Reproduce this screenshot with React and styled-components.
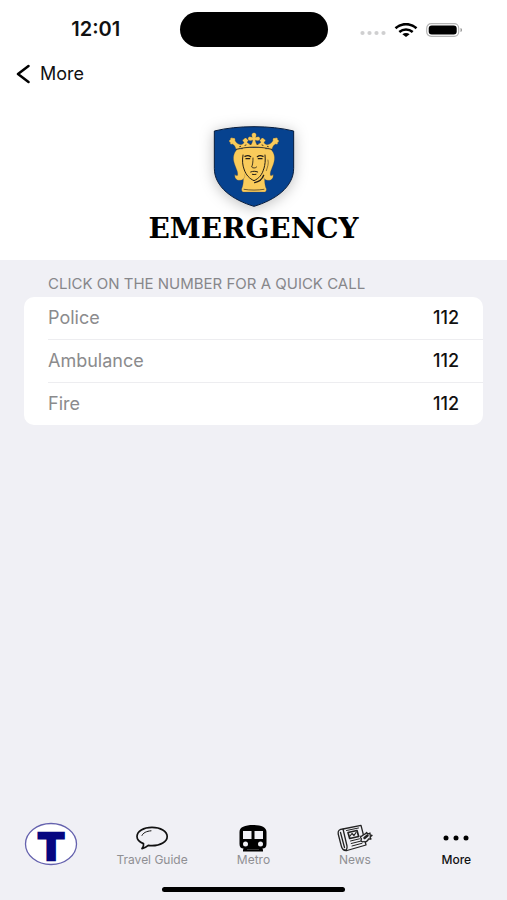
import { useState } from "react";
import styled, { createGlobalStyle } from "styled-components";

const GlobalStyle = createGlobalStyle`
  * {
    box-sizing: border-box;
  }
  body {
    margin: 0;
    background-color: #f0f0f5;
    font-family: Inter, "Liberation Sans", sans-serif;
    color: #111;
  }
`;

const Page = styled.div`
  min-height: 100vh;
  display: flex;
  flex-direction: column;
`;

const Header = styled.header`
  background-color: #fff;
  padding-bottom: 15px;
`;

const StatusBar = styled.div`
  display: grid;
  grid-template-columns: 1fr 148px 1fr;
  align-items: center;
  padding-top: 12px;
`;

const Time = styled.time`
  padding-left: 12px;
  text-align: center;
  font-size: 20px;
  font-weight: 600;
  line-height: 35px;
`;

const Island = styled.div`
  height: 35px;
  border-radius: 18px;
  background-color: #000;
`;

const StatusIcons = styled.div`
  display: flex;
  align-items: center;
  gap: 8px;
  padding-left: 32px;
`;

const BackButton = styled.button`
  display: flex;
  align-items: center;
  gap: 10px;
  margin-top: 15px;
  padding: 0 16px;
  border: none;
  background: none;
  color: #111;
  font-family: inherit;
  font-size: 18px;
  line-height: 24px;
`;

const Brand = styled.div`
  display: flex;
  flex-direction: column;
  align-items: center;
  padding-top: 40px;
`;

const ShieldSvg = styled.svg`
  display: block;
  filter: drop-shadow(0 2px 7px rgba(0, 0, 0, 0.25));
`;

const Title = styled.h1`
  margin: 5px 0 0;
  font-family: "DejaVu Serif", serif;
  font-size: 28px;
  font-weight: 700;
  line-height: 33px;
  color: #000;
`;

const Content = styled.main`
  flex: 1;
  padding: 14px 24px;
`;

const SectionTitle = styled.h2`
  margin: 0;
  padding: 0 24px;
  font-size: 15px;
  font-weight: 400;
  line-height: 20px;
  color: #87878b;
`;

const NumberList = styled.ul`
  margin: 3px 0 0;
  padding: 0 0 0 24px;
  list-style: none;
  border-radius: 10px;
  background-color: #fff;
`;

const NumberRow = styled.li`
  display: flex;
  justify-content: space-between;
  padding-right: 24px;
  font-size: 18px;
  line-height: 42px;

  & + & {
    border-top: 1px solid #ededf0;
  }
`;

const ServiceName = styled.span`
  color: #8b8b8d;
`;

const PhoneLink = styled.a`
  color: #111;
  font-weight: 500;
  text-decoration: none;
`;

const TabBar = styled.nav`
  display: grid;
  grid-template-columns: repeat(5, 1fr);
  height: 65px;
`;

const TabButton = styled.button`
  display: flex;
  flex-direction: column;
  align-items: center;
  padding: 0;
  border: none;
  background: none;
  font-family: inherit;
  font-size: 12px;
  font-weight: ${(props) => (props.$active ? 500 : 400)};
  line-height: 12px;
  color: ${(props) => (props.$active ? "#111" : "#8f8f93")};
`;

const TabIcon = styled.span`
  display: flex;
  align-items: center;
  justify-content: center;
  height: ${(props) => (props.$large ? "44px" : "32px")};
`;

const HomeIndicator = styled.div`
  width: 36%;
  height: 5px;
  margin: 0 auto 8px;
  border-radius: 3px;
  background-color: #000;
`;

const SignalIcon = () => (
  <svg width="26" height="12" viewBox="0 0 26 12" fill="#cfcfd0">
    <circle cx="2.5" cy="9" r="2.1" />
    <circle cx="9.5" cy="9" r="2.1" />
    <circle cx="16.5" cy="9" r="2.1" />
    <circle cx="23.5" cy="9" r="2.1" />
  </svg>
);

const WifiIcon = () => (
  <svg width="24" height="14" viewBox="0 0 24 14" fill="none" stroke="#000">
    <path d="M1.5 5.2C7.5-.2 16.5-.2 22.5 5.2" strokeWidth="2.6" />
    <path d="M5.3 9c4-3.400 9.400-3.400 13.400 0" strokeWidth="2.5" />
    <path d="M12 14 8.400 11.300c2-1.600 5.200-1.600 7.200 0z" fill="#000" stroke="none" />
  </svg>
);

const BatteryIcon = () => (
  <svg width="37" height="14" viewBox="0 0 37 14">
    <rect x=".7" y=".7" width="32" height="12.6" rx="4.5" fill="#fff" stroke="#b5b5b5" strokeWidth="1.2" />
    <rect x="2.7" y="2.5" width="28" height="9" rx="3" fill="#000" />
    <path d="M34.5 5c2 .4 2 3.600 0 4z" fill="#999" />
  </svg>
);

const Shield = () => (
  <ShieldSvg width="82" height="81" viewBox="40 32 244 243">
    <path
      d="M43 47C80 38 120 34 162 34s82 4 119 13v112c0 56-55 95-119 114C98 254 43 215 43 159z"
      fill="#06428f"
      stroke="#071c3c"
      strokeWidth="3"
    />
    <g fill="#f9cb5b" stroke="#5a4a2c" strokeWidth=".8" strokeLinejoin="round">
      <path d="M130 178c1 22-1 34-5 42-1 7 2 10 7 10h60c5 0 8-3 7-10-4-8-6-20-5-42z" />
      <path d="M112 101c-12 13-14 27-9 43 4 14 12 25 10 36-4 2-8 0-8-4-3 12 5 20 15 19 8-1 12-5 14-10l8-84zM212 101c12 13 14 27 9 43-4 14-12 25-10 36 4 2 8 0 8-4 3 12-5 20-15 19-8-1-12-5-14-10l-8-84z" />
      <path d="M128 98h68l1 54c-2 23-16 44-35 51-19-7-33-28-35-51z" stroke="none" />
      <path d="M108 102c-2-9-6-14-11-16-4 3-8-1-6-5-5-1-5-7 0-8-1-5 4-7 8-4 4-3 8 1 6 6 3 8 9 12 18 13 5-1 9-4 9-8-6-2-5-8 0-8 1-5 8-5 9 0 5 1 5 6 0 8 2 4 7 7 14 5 2-4 3-7 3-11-5 3-14 3-14-4s8-7 13-4c-3-5-3-14 5-14s8 9 5 14c5-3 13-3 13 4s-9 7-14 4c0 4 1 7 3 11 7 2 12-1 14-5-5-2-5-7 0-8 1-5 8-5 9 0 5 0 6 6 0 8 0 4 4 7 9 8 9-1 15-5 18-13-2-5 2-9 6-6 4-3 9-1 8 4 5 1 5 7 0 8 2 4-2 8-6 5-5 2-9 7-11 16-34-8-74-8-108 0z" />
    </g>
    <g fill="none" stroke="#221c16" strokeLinecap="round">
      <path d="M109 102c34-9 74-9 106 0" strokeWidth="2" />
      <path d="M119 94l3-1m13-3 3-1m12-2 3 0m18 0 3 0m12 2 3 1m13 3 3 1" strokeWidth="2.5" />
      <path d="M135 123c6-3 12-3 17 1M172 124c5-4 11-4 17-1" strokeWidth="4" />
      <path d="M138 130h11m26 0h11" strokeWidth="4" />
      <path d="M159 128c0 12-1 20-4 27 3 4 12 4 15 0" strokeWidth="2.5" />
      <path d="M152 170c8-3 13-3 21 0m-16 7c4 1 7 1 11 0" strokeWidth="3" />
      <path d="M129 119c-3 18-1 31 3 42 6 19 17 29 30 35 14-6 25-18 29-35" strokeWidth="3" />
      <path d="M195 119c2 18 0 28-3 40" strokeWidth="3" />
      <path d="M204 134c3 12-2 21-5 32" strokeWidth="1.5" />
      <path d="M191 180c-5 13-14 20-27 22" strokeWidth="4" />
      <path d="M132 222c19 3 41 3 60 0" strokeWidth="2" />
    </g>
  </ShieldSvg>
);

const MetroLogo = () => (
  <svg width="54" height="56" viewBox="0 -6 54 56">
    <ellipse cx="27" cy="22" rx="25.5" ry="20.5" fill="#fff" stroke="#6562ae" strokeWidth="1.3" />
    <text
      x="27"
      y="38"
      textAnchor="middle"
      fontFamily="DejaVu Sans"
      fontSize="37"
      fontWeight="700"
      fill="#060680"
      stroke="#060680"
      strokeWidth="2.5"
    >
      T
    </text>
  </svg>
);

const GuideIcon = () => (
  <svg width="34" height="24" viewBox="0 0 34 24" fill="none" stroke="#111" strokeLinecap="round" strokeLinejoin="round">
    <path
      d="M8.5 17.600C4.500 16 2 13.500 2 10.400 2 5.200 8.500 1.300 17 1.300s15.200 3.900 15.200 9.100-6.700 9.300-15.200 9.300c-1.300 0-2.500-.1-3.700-.3-1.700 1.500-3.700 2.500-6.300 3.200 1.200-1.500 1.900-3.200 1.500-5z"
      strokeWidth="1.7"
    />
    <path d="M7 9.400c1-2.500 4.500-4.300 9-4.600" strokeWidth="1" />
  </svg>
);

const TrainIcon = () => (
  <svg width="28" height="27" viewBox="0 0 28 27">
    <path d="M.5 7C.5 2 6 0 14 0s13.500 2 13.500 7v12c0 3-1.500 4.500-4 4.500L24 25v1.500H4V25l.5-1.500c-2.500 0-4-1.500-4-4.500z" fill="#000" />
    <path d="M4 6h8.500v8H4zM15.500 6H24v8h-8.500z" fill="#f0f0f5" />
    <circle cx="6.5" cy="19" r="2.5" fill="#f0f0f5" />
    <circle cx="21.5" cy="19" r="2.5" fill="#f0f0f5" />
    <path d="M8 24.500h12" stroke="#444" strokeWidth=".8" />
  </svg>
);

const NewsIcon = () => (
  <svg width="36" height="28" viewBox="0 0 36 28" fill="none" stroke="#222" strokeLinecap="round" strokeLinejoin="round">
    <path d="M6 5 24 1.300 29 21 10 26.500C7 27 5 25 4.300 22L1.200 10c-.5-3 1-5 4.800-5z" strokeWidth="1.3" />
    <path d="M6 5 10 22c.5 3-1 4.500-2.500 4M3.500 8.500l4 15" strokeWidth="1.3" />
    <path d="M11 8.500 20 6.500l1.700 6-9 2z" strokeWidth="1.7" />
    <path d="M13 12l2-2.500 2 2 2-3" strokeWidth="1.2" />
    <path d="M9.500 6.500l12-2.500M13.500 17l9-2.200M14.200 19.500l10-2.500M15 22l10-2.700" strokeWidth="1" />
    <path d="M25 12c1-2 4-1.500 4.500-3.500l1.500 1.500 2-1v2l2 .5-2 1.500 1 2-2.500 0c-.5 2-3 3.500-4.500 2.500-2 1-4-1-2.500-2.500-1.500-1.500-1-3 .5-3z" fill="#f0f0f5" strokeWidth="1.3" />
    <path d="M27.500 14l3-2.500" strokeWidth="2.5" />
  </svg>
);

const MoreIcon = () => (
  <svg width="26" height="6" viewBox="0 0 26 6">
    <circle cx="3" cy="3" r="2.5" />
    <circle cx="13" cy="3" r="2.5" />
    <circle cx="23" cy="3" r="2.5" />
  </svg>
);

const contacts = [
  { name: "Police", phone: "112" },
  { name: "Ambulance", phone: "112" },
  { name: "Fire", phone: "112" },
];

const tabs = [
  { id: "home", Icon: MetroLogo },
  { id: "guide", label: "Travel Guide", Icon: GuideIcon },
  { id: "metro", label: "Metro", Icon: TrainIcon },
  { id: "news", label: "News", Icon: NewsIcon },
  { id: "more", label: "More", Icon: MoreIcon },
];

const App = () => {
  const [activeTab, setActiveTab] = useState("more");

  return (
    <Page>
      <GlobalStyle />
      <Header>
        <StatusBar>
          <Time>12:01</Time>
          <Island />
          <StatusIcons>
            <SignalIcon />
            <WifiIcon />
            <BatteryIcon />
          </StatusIcons>
        </StatusBar>
        <BackButton type="button">
          <svg width="14" height="20" viewBox="0 0 14 20" fill="none" stroke="#000" strokeWidth="2.5" strokeLinecap="round" strokeLinejoin="round">
            <path d="M12.5 2 2 10l10.500 8" />
          </svg>
          More
        </BackButton>
        <Brand>
          <Shield />
          <Title>EMERGENCY</Title>
        </Brand>
      </Header>

      <Content>
        <SectionTitle>CLICK ON THE NUMBER FOR A QUICK CALL</SectionTitle>
        <NumberList>
          {contacts.map((contact) => (
            <NumberRow key={contact.name}>
              <ServiceName>{contact.name}</ServiceName>
              <PhoneLink href={`tel:${contact.phone}`}>{contact.phone}</PhoneLink>
            </NumberRow>
          ))}
        </NumberList>
      </Content>

      <TabBar>
        {tabs.map(({ id, label, Icon }) => (
          <TabButton
            key={id}
            type="button"
            aria-label={label || "Home"}
            $active={activeTab === id}
            onClick={() => setActiveTab(id)}
          >
            <TabIcon $large={!label}>
              <Icon />
            </TabIcon>
            {label}
          </TabButton>
        ))}
      </TabBar>
      <HomeIndicator />
    </Page>
  );
};

export default App;
